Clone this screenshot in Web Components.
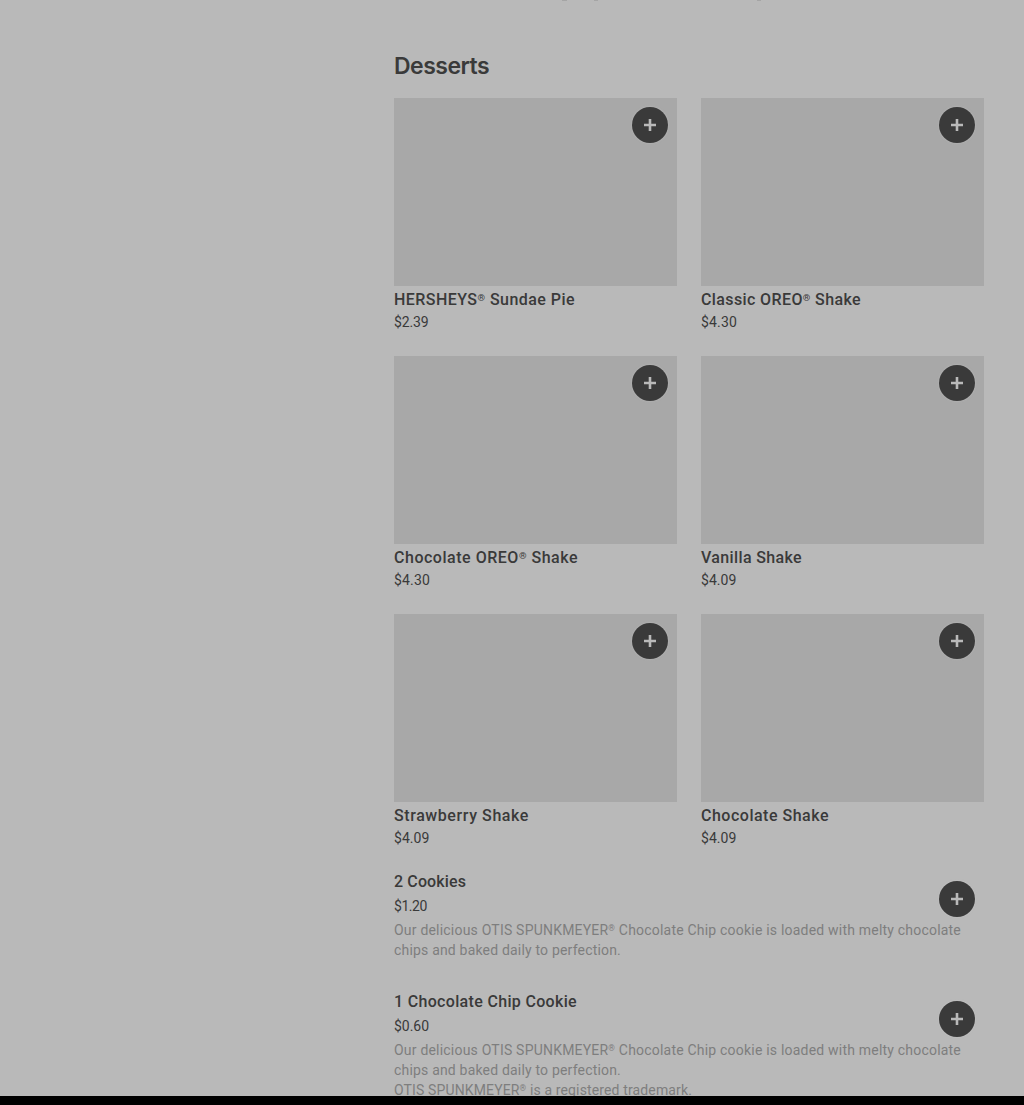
<!DOCTYPE html>
<html lang="en">
<head>
<meta charset="utf-8">
<title>Desserts</title>
<style>
html,body{margin:0;background:#000}
body{height:1105px;overflow:hidden;font-family:Roboto,"Liberation Sans",sans-serif;color:#3a3a3a}
</style>
</head>
<body>
<menu-page></menu-page>
<script>
// One line of text, tracked so that it fills the width given in "w".
class FitText extends HTMLElement {
  connectedCallback() {
    if (this.shadowRoot) return;
    const root = this.attachShadow({mode: 'open'});
    root.innerHTML = `<style>
      :host{display:block;white-space:nowrap}
      .line{display:inline-block}
      small{font-size:.6em;line-height:0;position:relative;top:-.45em}
    </style><span class="line"></span>`;
    const line = root.querySelector('.line');
    const text = this.getAttribute('text');
    line.innerHTML = text.replace(/®/g, '<small>®</small>');
    const w = Number(this.getAttribute('w'));
    if (w) line.style.letterSpacing = ((w - line.getBoundingClientRect().width) / text.length).toFixed(4) + 'px';
  }
}
class AddButton extends HTMLElement {
  connectedCallback() {
    this.attachShadow({mode: 'open'}).innerHTML = `<style>
      :host{display:block;width:36px;height:36px}
      button{display:block;width:36px;height:36px;padding:0;border:0;border-radius:50%;background:#3a3a3a;box-shadow:0 0 2px rgba(205,205,205,.55)}
      svg{display:block}
    </style><button aria-label="Add"><svg width="36" height="36" viewBox="0 0 36 36"><path d="M18 12v12M12 18h12" stroke="#bababa" stroke-width="2.6" fill="none"/></svg></button>`;
  }
}
class DessertCard extends HTMLElement {
  connectedCallback() {
    const a = n => this.getAttribute(n);
    this.attachShadow({mode: 'open'}).innerHTML = `<style>
      :host{display:block;height:234px}
      .photo{height:188px;background:#a8a8a8;display:flex;justify-content:flex-end;align-items:flex-start;padding:9px;box-sizing:border-box}
      .name{font-size:16px;font-weight:500;line-height:22px;margin-top:3px}
      .price{font-size:14px;line-height:20px;margin-top:1px}
    </style><div class="photo"><add-button></add-button></div>
    <fit-text class="name" text="${a('name')}" w="${a('name-w')}"></fit-text>
    <fit-text class="price" text="${a('price')}" w="${a('price-w')}"></fit-text>`;
  }
}
class DessertRow extends HTMLElement {
  connectedCallback() {
    const a = n => this.getAttribute(n);
    this.attachShadow({mode: 'open'}).innerHTML = `<style>
      :host{display:block;height:120px}
      .top{display:flex;justify-content:space-between;height:50px;padding-right:9px}
      .name{font-size:16px;font-weight:500;line-height:22px;padding-top:1px}
      .price{font-size:14px;line-height:20px;margin-top:3px}
      add-button{margin-top:11px}
      .desc{color:#7e7e7e;font-size:14px;line-height:20px}
    </style><div class="top"><div>
      <fit-text class="name" text="${a('name')}" w="${a('name-w')}"></fit-text>
      <fit-text class="price" text="${a('price')}" w="${a('price-w')}"></fit-text>
    </div><add-button></add-button></div>
    <div class="desc"><slot></slot></div>`;
  }
}
class MenuPage extends HTMLElement {
  connectedCallback() {
    this.attachShadow({mode: 'open'}).innerHTML = `<style>
      :host{display:block;height:1096px;overflow:hidden;background:#b9b9b9}
      .previous{display:block;height:50px}
      main{margin-left:394px;width:590px}
      h2{margin:0;height:48px;font:600 23px/32px Inter,sans-serif}
      .grid{display:grid;grid-template-columns:283px 283px;gap:24px;margin-bottom:22px}
    </style>
    <svg class="previous" width="1024" height="50" viewBox="0 0 1024 50"><path d="M562 .3h5M594 .3h4M757 .3h4" stroke="#959595" stroke-width=".7"/></svg>
    <main>
      <h2><fit-text text="Desserts" w="95"></fit-text></h2>
      <div class="grid">
        <dessert-card name="HERSHEYS® Sundae Pie" name-w="181" price="$2.39" price-w="34.5"></dessert-card>
        <dessert-card name="Classic OREO® Shake" name-w="160" price="$4.30" price-w="36"></dessert-card>
        <dessert-card name="Chocolate OREO® Shake" name-w="184" price="$4.30" price-w="36"></dessert-card>
        <dessert-card name="Vanilla Shake" name-w="101" price="$4.09" price-w="35.5"></dessert-card>
        <dessert-card name="Strawberry Shake" name-w="135" price="$4.09" price-w="35.5"></dessert-card>
        <dessert-card name="Chocolate Shake" name-w="128" price="$4.09" price-w="35.5"></dessert-card>
      </div>
      <dessert-row name="2 Cookies" name-w="72" price="$1.20" price-w="33">
        <fit-text text="Our delicious OTIS SPUNKMEYER® Chocolate Chip cookie is loaded with melty chocolate" w="567"></fit-text>
        <fit-text text="chips and baked daily to perfection." w="227"></fit-text>
      </dessert-row>
      <dessert-row name="1 Chocolate Chip Cookie" name-w="183" price="$0.60" price-w="35">
        <fit-text text="Our delicious OTIS SPUNKMEYER® Chocolate Chip cookie is loaded with melty chocolate" w="567"></fit-text>
        <fit-text text="chips and baked daily to perfection." w="227"></fit-text>
        <fit-text text="OTIS SPUNKMEYER® is a registered trademark." w="298"></fit-text>
      </dessert-row>
    </main>`;
  }
}
customElements.define('fit-text', FitText);
customElements.define('add-button', AddButton);
customElements.define('dessert-card', DessertCard);
customElements.define('dessert-row', DessertRow);
customElements.define('menu-page', MenuPage);
</script>
</body>
</html>
